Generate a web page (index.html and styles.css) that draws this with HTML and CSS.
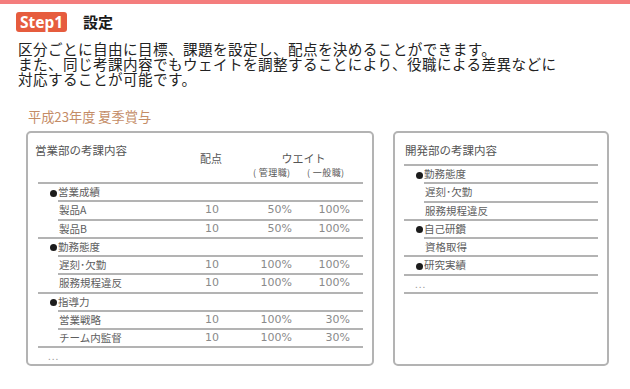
FILE: index.html
```html
<!DOCTYPE html>
<html lang="ja">
<head>
<meta charset="utf-8">
<title>Step1 設定</title>
<link rel="stylesheet" href="styles.css">
</head>
<body>
<div class="topbar"></div>
<div class="head">
  <span class="badge">Step1</span>
  <span class="htitle">設定</span>
</div>
<div class="desc">
  <div class="dline">区分ごとに自由に目標、課題を設定し、配点を決めることができます。</div>
  <div class="dline">また、同じ考課内容でもウェイトを調整することにより、役職による差異などに</div>
  <div class="dline">対応することが可能です。</div>
</div>
<div class="fig">
  <div class="figtitle">平成23年度 夏季賞与</div>
  <div class="panels">
    <div class="box box-l">
      <div class="thead">
        <div class="tname">営業部の考課内容</div>
        <div class="tpoint">配点</div>
        <div class="tweight">
          <div class="wlabel">ウエイト</div>
          <div class="wsub"><span class="ws1">( 管理職)</span><span class="ws2">( 一般職)</span></div>
        </div>
      </div>
      <div class="row sec sub"><span class="name"><i class="dot"></i>営業成績</span></div>
      <div class="row item sub"><span class="name">製品A</span><span class="pt">10</span><span class="w1">50%</span><span class="w2">100%</span></div>
      <div class="row item"><span class="name">製品B</span><span class="pt">10</span><span class="w1">50%</span><span class="w2">100%</span></div>
      <div class="row sec sub"><span class="name"><i class="dot"></i>勤務態度</span></div>
      <div class="row item sub"><span class="name">遅刻･欠勤</span><span class="pt">10</span><span class="w1">100%</span><span class="w2">100%</span></div>
      <div class="row item"><span class="name">服務規程違反</span><span class="pt">10</span><span class="w1">100%</span><span class="w2">100%</span></div>
      <div class="row sec sub"><span class="name"><i class="dot"></i>指導力</span></div>
      <div class="row item sub"><span class="name">営業戦略</span><span class="pt">10</span><span class="w1">100%</span><span class="w2">30%</span></div>
      <div class="row item"><span class="name">チーム内監督</span><span class="pt">10</span><span class="w1">100%</span><span class="w2">30%</span></div>
      <div class="more">...</div>
    </div>
    <div class="box box-r">
      <div class="thead thead-r">
        <div class="tname">開発部の考課内容</div>
      </div>
      <div class="row sec sub"><span class="name"><i class="dot"></i>勤務態度</span></div>
      <div class="row item sub"><span class="name">遅刻･欠勤</span></div>
      <div class="row item"><span class="name">服務規程違反</span></div>
      <div class="row sec sub"><span class="name"><i class="dot"></i>自己研鑽</span></div>
      <div class="row item"><span class="name">資格取得</span></div>
      <div class="row sec"><span class="name"><i class="dot"></i>研究実績</span></div>
      <div class="more more-r">...</div>
    </div>
  </div>
</div>
</body>
</html>
```

FILE: styles.css
```css
* { box-sizing: border-box; }
html, body { margin: 0; padding: 0; background: #fff; }
body {
  width: 630px;
  height: 389px;
  overflow: hidden;
  font-family: "Noto Sans CJK JP", "Noto Sans", sans-serif;
  color: #222;
}
.topbar { height: 4px; background: #f47d7d; }
.head {
  display: flex;
  align-items: center;
  padding-top: 8px;
  padding-left: 16px;
  gap: 16px;
}
.badge {
  width: 51px;
  height: 20px;
  line-height: 20px;
  text-align: center;
  background: #e65c3e;
  color: #fff;
  border-radius: 3px;
  font-family: "Noto Sans", "Liberation Sans", sans-serif;
  font-weight: 700;
  font-size: 15.5px;
}
.htitle {
  font-weight: 700;
  font-size: 15px;
  line-height: 20px;
  color: #1a1a1a;
}
.desc {
  margin-top: 9px;
  padding-left: 18px;
  font-size: 14.6px;
  letter-spacing: 0.4px;
  color: #222;
}
.dline {
  height: 15px;
  line-height: 15px;
  white-space: nowrap;
}
.fig { margin-top: 23px; }
.figtitle {
  padding-left: 28px;
  font-size: 13.2px;
  line-height: 16px;
  color: #c48c66;
}
.panels {
  display: flex;
  align-items: flex-start;
  gap: 19px;
  margin-top: 6px;
  padding-left: 26px;
}
.box {
  height: 235px;
  border: 2px solid #b3b3b3;
  border-radius: 5px;
  color: #666;
}
.box-l { width: 348px; padding: 0 9px 0 10px; }
.box-r { width: 216px; padding: 0 9px; }

.thead {
  display: flex;
  box-sizing: content-box;
  height: 49px;
  border-bottom: 2px solid #b3b3b3;
}
.thead-r { height: 31px; }
.tname {
  flex: none;
  width: 170px;
  margin-left: -3px;
  padding-top: 10px;
  font-size: 11.5px;
  line-height: 14px;
  color: #555;
  white-space: nowrap;
}
.thead-r .tname { margin-left: 1px; }
.tpoint {
  flex: none;
  width: 40px;
  padding-top: 18px;
  text-indent: -5px;
  font-size: 11px;
  line-height: 14px;
  color: #555;
}
.tweight {
  flex: none;
  width: 105px;
  padding-top: 18px;
  color: #555;
}
.wlabel {
  padding-left: 12px;
  text-align: center;
  font-size: 11px;
  line-height: 14px;
}
.wsub {
  display: flex;
  margin-top: 2px;
  padding-left: 8px;
  font-size: 9px;
  line-height: 12px;
  letter-spacing: 0.4px;
  white-space: nowrap;
}
.ws1 { width: 54px; }

.row {
  --off: 0px;
  --ind: 21px;
  display: flex;
  box-sizing: content-box;
  height: 16.25px;
  line-height: 16.25px;
  border-bottom: 2px solid #b3b3b3;
  font-size: 10.5px;
  white-space: nowrap;
}
.row.sub { --off: 20px; margin-left: 20px; }
.row.sec { --ind: 12px; }
.name {
  flex: none;
  margin-left: calc(var(--ind) - var(--off));
  width: calc(167px - var(--ind));
  color: #5e5e5e;
}
.dot {
  display: inline-block;
  width: 7px;
  height: 7px;
  border-radius: 50%;
  background: #1c1c1c;
  margin-right: 1px;
  vertical-align: -0.5px;
}
.pt, .w1, .w2 {
  flex: none;
  font-family: "DejaVu Sans", sans-serif;
  font-size: 11px;
  color: #8a8a8a;
}
.pt { width: 40px; }
.w1 { width: 47px; text-align: right; }
.w2 { width: 58px; text-align: right; }

.more {
  padding-left: 10px;
  font-size: 10px;
  line-height: 16px;
  letter-spacing: 1px;
  color: #999;
}
.more-r {
  box-sizing: content-box;
  height: 16.25px;
  line-height: 15px;
  padding-left: 11px;
  border-bottom: 2px solid #b3b3b3;
}
```
